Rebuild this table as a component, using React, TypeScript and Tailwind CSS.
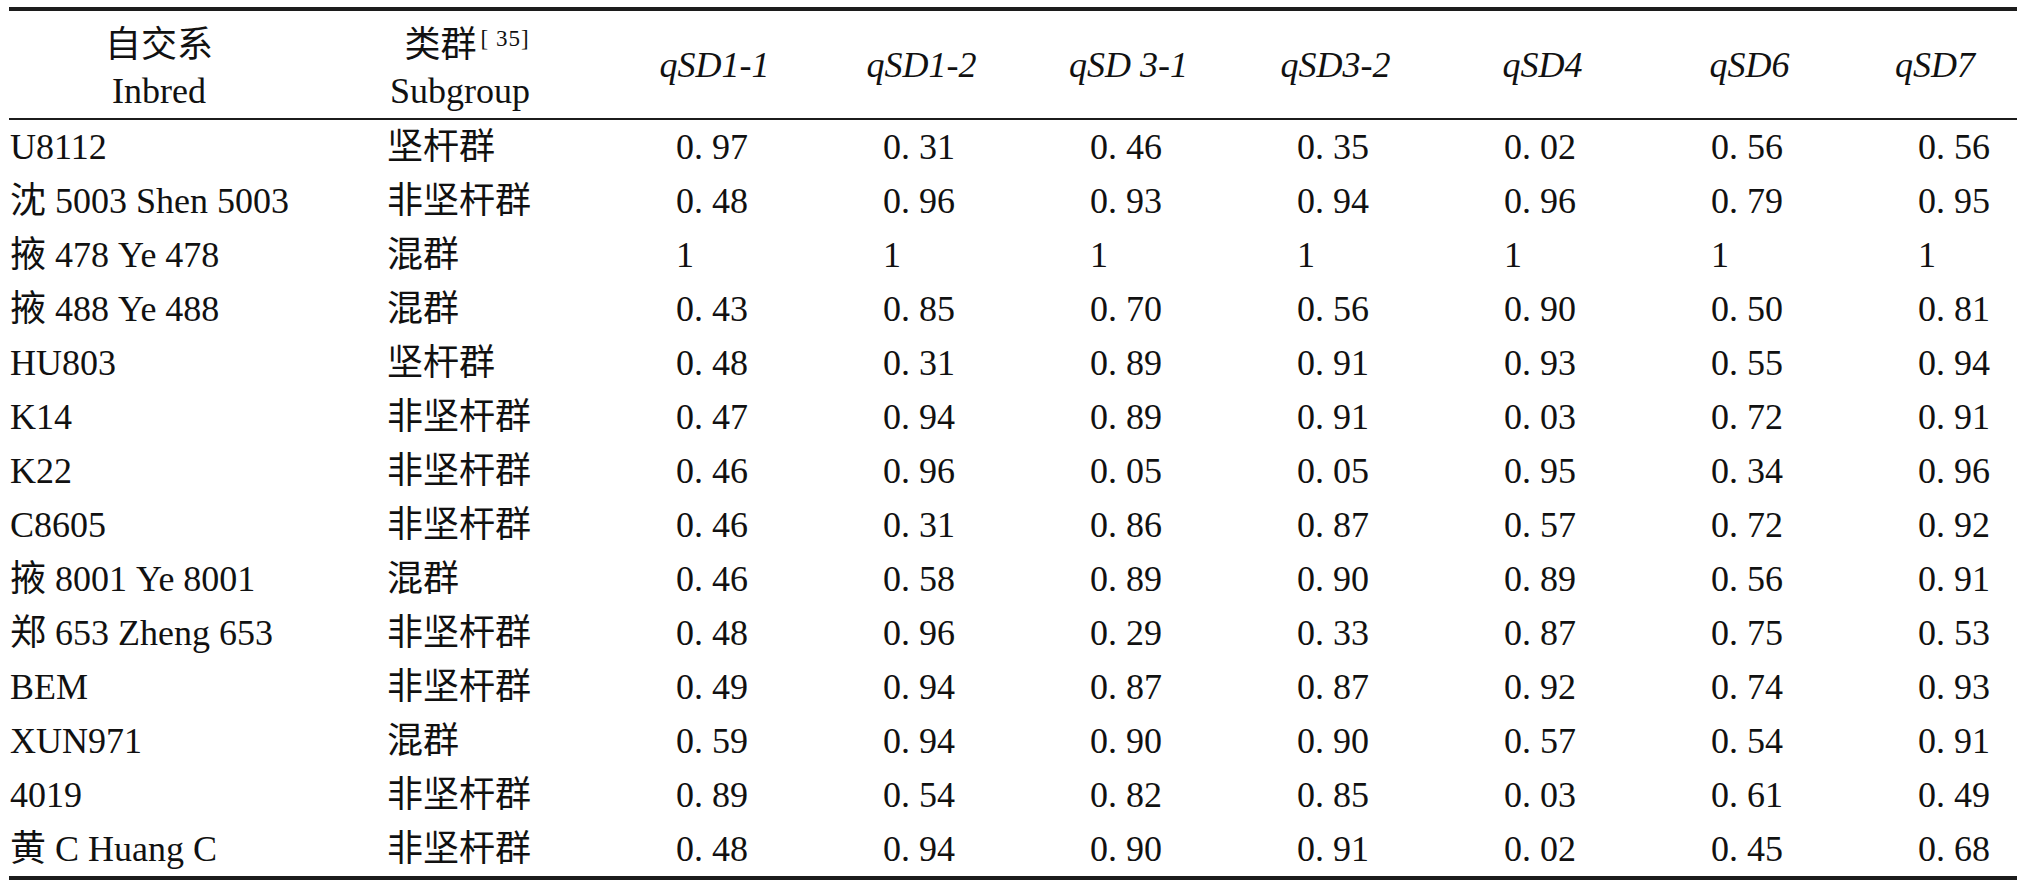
const HEADERS = ['qSD1-1', 'qSD1-2', 'qSD 3-1', 'qSD3-2', 'qSD4', 'qSD6', 'qSD7'];

const ROWS: [string, string, string[]][] = [
  ['U8112', '坚杆群', ['0. 97', '0. 31', '0. 46', '0. 35', '0. 02', '0. 56', '0. 56']],
  ['沈 5003 Shen 5003', '非坚杆群', ['0. 48', '0. 96', '0. 93', '0. 94', '0. 96', '0. 79', '0. 95']],
  ['掖 478 Ye 478', '混群', ['1', '1', '1', '1', '1', '1', '1']],
  ['掖 488 Ye 488', '混群', ['0. 43', '0. 85', '0. 70', '0. 56', '0. 90', '0. 50', '0. 81']],
  ['HU803', '坚杆群', ['0. 48', '0. 31', '0. 89', '0. 91', '0. 93', '0. 55', '0. 94']],
  ['K14', '非坚杆群', ['0. 47', '0. 94', '0. 89', '0. 91', '0. 03', '0. 72', '0. 91']],
  ['K22', '非坚杆群', ['0. 46', '0. 96', '0. 05', '0. 05', '0. 95', '0. 34', '0. 96']],
  ['C8605', '非坚杆群', ['0. 46', '0. 31', '0. 86', '0. 87', '0. 57', '0. 72', '0. 92']],
  ['掖 8001 Ye 8001', '混群', ['0. 46', '0. 58', '0. 89', '0. 90', '0. 89', '0. 56', '0. 91']],
  ['郑 653 Zheng 653', '非坚杆群', ['0. 48', '0. 96', '0. 29', '0. 33', '0. 87', '0. 75', '0. 53']],
  ['BEM', '非坚杆群', ['0. 49', '0. 94', '0. 87', '0. 87', '0. 92', '0. 74', '0. 93']],
  ['XUN971', '混群', ['0. 59', '0. 94', '0. 90', '0. 90', '0. 57', '0. 54', '0. 91']],
  ['4019', '非坚杆群', ['0. 89', '0. 54', '0. 82', '0. 85', '0. 03', '0. 61', '0. 49']],
  ['黄 C Huang C', '非坚杆群', ['0. 48', '0. 94', '0. 90', '0. 91', '0. 02', '0. 45', '0. 68']],
];

export default function App() {
  return (
    <div className="min-h-screen bg-white pl-[9px] pt-[7px] text-[#111] font-['Liberation_Serif','Noto_Sans_CJK_SC',serif] text-[36px]">
      <table className="w-[2008px] table-fixed border-collapse border-t-4 border-b-4 border-[#1c1c1c]">
        <colgroup>
          <col className="w-[300px]" />
          <col className="w-[302px]" />
          <col className="w-[207px]" />
          <col className="w-[207px]" />
          <col className="w-[207px]" />
          <col className="w-[207px]" />
          <col className="w-[207px]" />
          <col className="w-[207px]" />
          <col className="w-[164px]" />
        </colgroup>
        <thead>
          <tr className="h-[110px] border-b-2 border-[#1c1c1c]">
            <th className="p-0 pt-[6px] text-center font-normal leading-[48px]">
              <div>自交系</div>
              <div className="-mt-[2px]">Inbred</div>
            </th>
            <th className="p-0 pt-[6px] text-center font-normal leading-[48px]">
              <div className="pl-[14px]">
                类群
                <span className="relative top-[6px] ml-[4px] inline-block align-top text-[23px] leading-none tracking-[1px]">[ 35]</span>
              </div>
              <div className="-mt-[2px]">Subgroup</div>
            </th>
            {HEADERS.map((h) => (
              <th key={h} className="p-0 text-center font-normal italic">
                {h}
              </th>
            ))}
          </tr>
        </thead>
        <tbody>
          {ROWS.map(([name, group, vals]) => (
            <tr key={name} className="h-[54px] leading-[54px]">
              <td className="p-0 pl-[1px] whitespace-nowrap">{name}</td>
              <td className="p-0 pl-[78px] whitespace-nowrap">{group}</td>
              {vals.map((v, i) => (
                <td key={i} className="p-0 pl-[65px] whitespace-pre">
                  {v}
                </td>
              ))}
            </tr>
          ))}
        </tbody>
      </table>
    </div>
  );
}
